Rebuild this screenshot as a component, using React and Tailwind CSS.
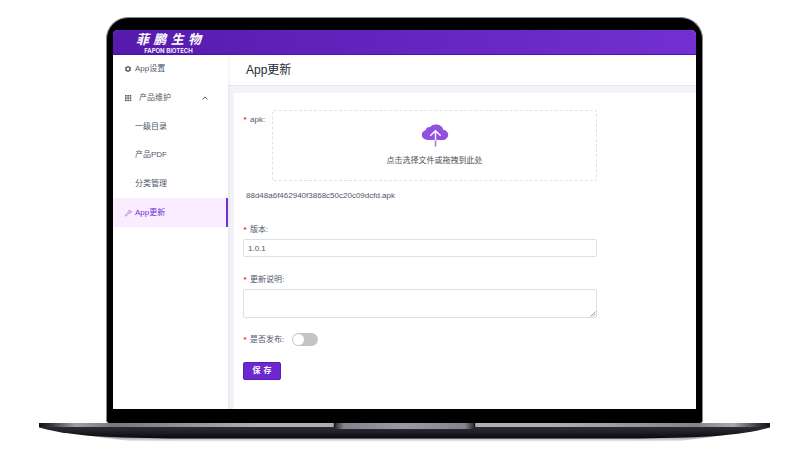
import React, { useState } from 'react'

const MENU = [
  { key: 'settings', label: 'App设置', icon: 'ring' },
  { key: 'products', label: '产品维护', icon: 'grid', open: true },
  { key: 'catalog', label: '一级目录' },
  { key: 'pdf', label: '产品PDF' },
  { key: 'category', label: '分类管理' },
  { key: 'update', label: 'App更新', icon: 'tool', active: true },
]

function MenuIcon({ name }) {
  if (name === 'ring') {
    return (
      <svg viewBox="0 0 8 8" className="w-2 h-2" fill="none" stroke="#4b5264">
        <circle cx="4" cy="4" r="2.1" strokeWidth="1.3" />
        <path d="M4 .8v.8M4 6.4v.8M1.2 2.4l.7.4M6.1 5.2l.7.4M1.2 5.6l.7-.4M6.1 2.8l.7-.4" strokeWidth=".8" />
      </svg>
    )
  }
  if (name === 'grid') {
    return (
      <svg viewBox="0 0 8 8" className="w-2 h-2" fill="#4b5264">
        {[1, 3.3, 5.6].map((y) =>
          [1, 3.3, 5.6].map((x) => <rect key={`${x}-${y}`} x={x} y={y} width="1.6" height="1.6" />)
        )}
      </svg>
    )
  }
  if (name === 'tool') {
    return (
      <svg viewBox="0 0 8 8" className="w-2 h-2" fill="none" stroke="#a98bc9" strokeWidth=".8" strokeLinejoin="round">
        <path d="M1 6.6 4.1 3.5C3.8 2.2 4.8 1 6.2 1.3L5.2 2.3l.5.6.7.1 1-1C7.7 3.400 6.400 4.400 5 4L2 7.200z" />
      </svg>
    )
  }
  return <span className="w-2" />
}

function Logo() {
  return (
    <a href="#home" className="flex flex-col items-center w-[65px] text-white">
      <span className="flex justify-between w-full text-[13px] leading-[15px] font-bold italic">
        <span>菲</span>
        <span>鹏</span>
        <span>生</span>
        <span>物</span>
      </span>
      <span className="text-[6px] leading-[7px] whitespace-nowrap font-['Inter',sans-serif] font-semibold">FAPON BIOTECH</span>
    </a>
  )
}

function Sidebar() {
  return (
    <aside className="relative w-[115px] shrink-0 bg-white shadow-[1px_0_3px_rgba(40,50,90,0.08)]">
      <nav className="grid auto-rows-fr h-[172px]">
        {MENU.map((item) => (
          <a
            key={item.key}
            href={`#${item.key}`}
            className={
              item.active
                ? 'flex items-center pl-[11px] pr-5 bg-[#f9edff] text-[#7430d2] border-r-2 border-[#7430d2]'
                : 'flex items-center pl-[11px] pr-5'
            }
          >
            <MenuIcon name={item.icon} />
            <span className={item.open ? 'ml-[7px]' : 'ml-[3px]'}>{item.label}</span>
            {item.open && (
              <svg viewBox="0 0 6 4" className="ml-auto w-[6px] h-1" fill="none" stroke="#4b5264" strokeWidth="1">
                <path d="M.5 3.400 3 .9l2.500 2.500" />
              </svg>
            )}
          </a>
        ))}
      </nav>
    </aside>
  )
}

function FieldLabel({ htmlFor, children }) {
  return (
    <label htmlFor={htmlFor} className="flex items-center gap-[3px] leading-[12px] whitespace-nowrap">
      <span className="w-1 text-center font-bold text-[#f5222d]">*</span>
      <span>{children}:</span>
    </label>
  )
}

function UpdateForm() {
  const [version, setVersion] = useState('1.0.1')
  const [notes, setNotes] = useState('')
  const [published, setPublished] = useState(false)

  return (
    <form className="pl-[9px] pr-[99px] pt-[17px] pb-[29px]" onSubmit={(e) => e.preventDefault()}>
      <div className="flex">
        <div className="w-[29px] shrink-0 pt-1">
          <FieldLabel htmlFor="apk">apk</FieldLabel>
        </div>
        <label
          htmlFor="apk"
          className="flex-1 h-[71px] flex flex-col items-center pt-[13px] border border-dashed border-[#e2e2e4] rounded-xs text-[#4f5257] cursor-pointer"
        >
          <svg viewBox="0 0 28 23" className="w-7 h-[23px]" fill="none">
            <path
              d="M7 16C3.500 16 .8 13.800.8 10.800.8 8.200 2.500 6.500 4.900 5.900 5.300 3.600 7.200 3 9.100 3.100 10.300 1.400 12.500.600 15 .600c3.600 0 6.500 2 7.100 5.100 3 .4 5.100 2.300 5.100 5 0 3-2.500 5.300-5.700 5.300z"
              fill="#9150de"
            />
            <path d="M14.500 16v6.500" stroke="#a877e6" strokeWidth="1.600" />
            <path d="M14.500 16.500V7M9.300 11.700l5.200-5 5.200 5" stroke="#fff" strokeWidth="1.400" />
          </svg>
          <span className="mt-2 leading-[12px]">点击选择文件或拖拽到此处</span>
          <input id="apk" type="file" accept=".apk" className="sr-only" />
        </label>
      </div>

      <p className="mt-[9px] pl-[3px] leading-[12px]">88d48a6f462940f3868c50c20c09dcfd.apk</p>

      <div className="mt-[22px]">
        <FieldLabel htmlFor="version">版本</FieldLabel>
        <input
          id="version"
          type="text"
          value={version}
          onChange={(e) => setVersion(e.target.value)}
          className="block mt-[3px] w-full h-[18px] px-1 border border-[#dfdfe2] rounded-xs outline-none"
        />
      </div>

      <div className="mt-[17px]">
        <FieldLabel htmlFor="notes">更新说明</FieldLabel>
        <div className="relative mt-[3px]">
          <textarea
            id="notes"
            value={notes}
            onChange={(e) => setNotes(e.target.value)}
            className="block w-full h-[29px] px-1 py-1 border border-[#dfdfe2] rounded-xs outline-none resize-none"
          />
          <svg viewBox="0 0 6 6" className="absolute right-px bottom-px w-[6px] h-[6px]" stroke="#85858a" strokeWidth=".8">
            <path d="M.5 5.500l5-5M3 5.500 5.500 3" />
          </svg>
        </div>
      </div>

      <div className="flex items-center gap-2 mt-[15px]">
        <FieldLabel htmlFor="published">是否发布</FieldLabel>
        <input
          id="published"
          type="checkbox"
          role="switch"
          checked={published}
          onChange={(e) => setPublished(e.target.checked)}
          className="appearance-none flex items-center w-[26px] h-[13px] px-px rounded-full bg-[#c4c4c4] checked:bg-[#7430d2] checked:justify-end before:block before:w-[11px] before:h-[11px] before:rounded-full before:bg-white"
        />
      </div>

      <button
        type="submit"
        className="flex items-center justify-center gap-[3px] mt-4 w-[38px] h-[18px] rounded-xs bg-[#6d28d0] border border-[#5c1bbd] text-white font-bold"
      >
        <span>保</span>
        <span>存</span>
      </button>
    </form>
  )
}

function LaptopBase() {
  return (
    <svg viewBox="0 0 731 24" preserveAspectRatio="none" className="block w-full h-6">
      <defs>
        <linearGradient id="deck" x1="0" x2="0" y1="0" y2="1">
          <stop offset="0" stopColor="#34343e" />
          <stop offset=".5" stopColor="#23232b" />
          <stop offset="1" stopColor="#08080c" />
        </linearGradient>
        <linearGradient id="rim" x1="0" x2="1" y1="0" y2="0">
          <stop offset="0" stopColor="#111" />
          <stop offset=".015" stopColor="#333338" />
          <stop offset=".05" stopColor="#a0a0a6" />
          <stop offset=".1" stopColor="#77777f" />
          <stop offset=".3" stopColor="#b0adb8" />
          <stop offset=".7" stopColor="#b0adb8" />
          <stop offset=".9" stopColor="#85858c" />
          <stop offset=".95" stopColor="#a8a8ad" />
          <stop offset=".985" stopColor="#333338" />
          <stop offset="1" stopColor="#111" />
        </linearGradient>
        <linearGradient id="notch" x1="0" x2="1" y1="0" y2="0">
          <stop offset="0" stopColor="#25252b" />
          <stop offset=".07" stopColor="#85838e" />
          <stop offset=".5" stopColor="#9a98a3" />
          <stop offset=".93" stopColor="#85838e" />
          <stop offset="1" stopColor="#25252b" />
        </linearGradient>
        <linearGradient id="shade" gradientUnits="userSpaceOnUse" x1="0" x2="0" y1="14" y2="19">
          <stop offset="0" stopColor="#999" />
          <stop offset="1" stopColor="#fff" />
        </linearGradient>
      </defs>
      <path d="M45 12h641l-45 6-60 1H150l-60-1z" fill="url(#shade)" />
      <path d="M0 0h731v4.500c-18 5-38 7.500-62 9-30 1.500-60 2-90 2H152c-30 0-60-.5-90-2C38 12 18 9.500 0 4.500z" fill="url(#deck)" />
      <rect width="731" height="4" fill="url(#rim)" />
      <path d="M295 0h141v4q-3 2-6 2H301q-3 0-6-2z" fill="url(#notch)" />
      <path d="M295.500 0v4M435.500 0v4" stroke="#15151a" strokeWidth="1.500" />
    </svg>
  )
}

export default function App() {
  return (
    <div className="min-h-screen bg-white pt-[17px] pl-[39px] pr-[30px] text-[8px] text-[#50576a] font-['Liberation_Sans','Noto_Sans_CJK_SC',sans-serif]">
      <div className="mx-[67px] rounded-t-[22px] rounded-b-[3px] border border-b-0 border-[#85858b] bg-black px-[6px] pt-3 pb-[14px]">
        <div className="overflow-hidden rounded-t-[5px] bg-[#f1f3f8]">
          <header className="flex items-center h-[25px] pt-px pl-[23px] bg-linear-to-r from-[#561aac] to-[#732fd2] border-b border-[#4d10b5]">
            <Logo />
          </header>

          <div className="flex">
            <Sidebar />
            <main className="flex-1 min-w-0">
              <div className="flex items-center h-[31px] pl-[18px] bg-white border-b border-[#e6e8ec]">
                <h1 className="text-[12px] text-[#262a33]">App更新</h1>
              </div>
              <section className="mt-[7px] ml-[6px] bg-white">
                <UpdateForm />
              </section>
            </main>
          </div>
        </div>
      </div>
      <LaptopBase />
    </div>
  )
}
